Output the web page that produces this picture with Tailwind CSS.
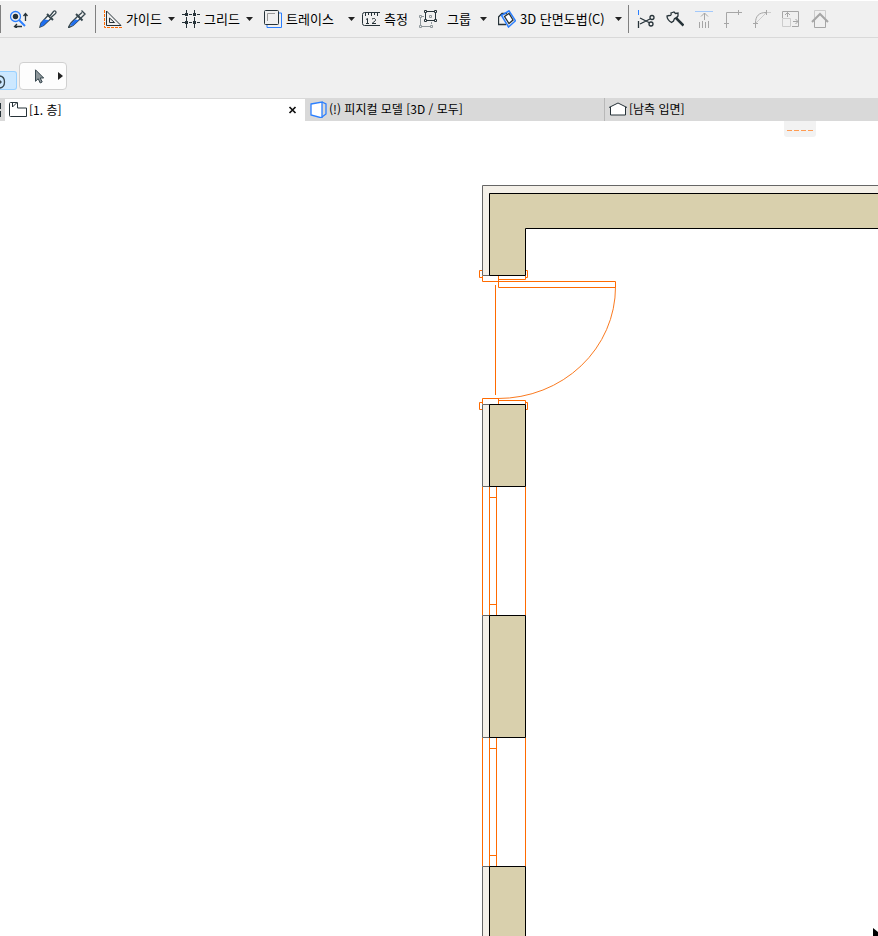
<!DOCTYPE html>
<html lang="ko">

<head>
    <meta charset="UTF-8">
    <meta name="viewport" content="width=device-width, initial-scale=1.0">
    <title>평면도</title>
    <script src="https://cdn.jsdelivr.net/npm/@tailwindcss/browser@4"></script>
</head>

<body class="h-screen flex flex-col overflow-hidden bg-white text-black font-['Noto_Sans_CJK_KR',sans-serif]">
    <!-- Toolbar -->
    <header class="shrink-0 bg-[#f0f0f0]">
        <div class="h-[38px] flex items-center border-t border-white border-b border-b-[#d9d9d9] text-[13px] leading-5 whitespace-nowrap overflow-hidden">
            <span class="w-px h-7 shrink-0 bg-[#808080] mr-[9px]"></span>
            <div class="flex shrink-0 gap-[11px] pr-[9px]">
                <button aria-label="찾기" class="block">
                    <svg width="18" height="18" viewBox="0 0 18 18" fill="none">
                        <circle cx="5.500" cy="6.500" r="5" stroke="#2b7fff" stroke-width="1.300" />
                        <path d="M9 10l6 6" stroke="#2b7fff" stroke-width="2" />
                        <circle cx="5.500" cy="6.500" r="2.700" fill="#263238" />
                        <path d="M15.500 4v7M13.500 6l2-2.500 2 2.500M12 16.500H5M7 14l-2.500 2.500L7 18" stroke="#263238" stroke-width="1.300" />
                    </svg>
                </button>
                <button aria-label="스포이드" class="block">
                    <svg width="18" height="18" viewBox="0 0 18 18" fill="none">
                        <path d="M1 17l1-4 7-7.500 3 3-7.500 7z" fill="#fff" stroke="#37474f" stroke-width="1.300" />
                        <path d="M1 17l1-4L5 9.500l5 .500-5.500 5.500z" fill="#1f6ff0" />
                        <path d="M8 4l6 6" stroke="#37474f" stroke-width="2" />
                        <path d="M11 6l3.500-4.500c1.500-1.500 3.500.5 2 2L12 7.500" fill="#fff" stroke="#37474f" stroke-width="1.300" />
                    </svg>
                </button>
                <button aria-label="주입" class="block">
                    <svg width="18" height="18" viewBox="0 0 18 18" fill="none">
                        <path d="M0 18l3-5L10 6l2.500 2.500-7.500 7z" fill="#fff" stroke="#37474f" stroke-width="1.300" />
                        <path d="M2 16l1.500-3L7 9.500l4 .5-6 5.500z" fill="#1f6ff0" />
                        <path d="M8 4l6.500 6.500" stroke="#37474f" stroke-width="2" />
                        <path d="M10 6l4-3.500M12.500 8.500L16.500 4.500M13.500.5l4 4" stroke="#37474f" stroke-width="1.300" />
                    </svg>
                </button>
            </div>
            <span class="w-px h-7 shrink-0 bg-[#808080] mr-2"></span>

            <button class="w-[71px] shrink-0 flex items-center">
                <svg class="mr-1 shrink-0" width="18" height="18" viewBox="0 0 18 18" fill="none">
                    <path d="M.5 0v17.500H18" stroke="#ff6a00" stroke-dasharray="3 1" />
                    <path d="M2.500 1v14.500H17zM5.500 8v4.500H10.500z" stroke="#263238" />
                </svg>
                가이드
                <svg class="ml-auto" width="7" height="4"><path d="M0 0h7L3.500 4z" fill="#222" /></svg>
            </button>
            <button class="w-[71px] ml-[7px] shrink-0 flex items-center">
                <svg class="mr-1 shrink-0" width="18" height="18" viewBox="0 0 18 18" fill="none" stroke="#263238">
                    <path d="M4.500 0v3M4.500 7v4M4.500 14v4M12.500 0v3M12.500 7v4M12.500 14v4M0 4.500h3M7 4.500h3M15 4.500h3M0 12.500h3M7 12.500h3M15 12.500h3" />
                    <path d="M3 4.500h3M11 4.500h3M3 12.500h3M11 12.500h3" stroke-width="3" />
                </svg>
                그리드
                <svg class="ml-auto" width="7" height="4"><path d="M0 0h7L3.500 4z" fill="#222" /></svg>
            </button>
            <button class="w-[91px] ml-[11px] shrink-0 flex items-center">
                <svg class="mr-1 shrink-0" width="18" height="18" viewBox="0 0 18 18" fill="none">
                    <path d="M17.500 3v14.500H3v-2.500M15 3h2.500" stroke="#2b7fff" />
                    <rect x=".5" y=".5" width="14" height="14" rx="1" stroke="#263238" />
                    <path d="M3.500 11V3.500H11" stroke="#999" />
                </svg>
                트레이스
                <svg class="ml-auto" width="7" height="4"><path d="M0 0h7L3.500 4z" fill="#222" /></svg>
            </button>
            <button class="w-[46px] ml-[7px] shrink-0 flex items-center">
                <svg class="mr-1 shrink-0" width="18" height="18" viewBox="0 0 18 18" fill="none" stroke="#263238">
                    <path d="M18 2.500H2.500Q.5 2.500.5 4.500v9q0 2 2 2H18M3.500 3v3M6.500 3v2M9.500 3v3M12.500 3v2M15.500 3v3" />
                    <path d="M4 9.500l1.500-1V14M4 13.500h3M10 9l1.500-.5h1l1 1v1l-3.500 3h4" />
                </svg>
                측정
            </button>
            <button class="w-[68px] ml-[11px] shrink-0 flex items-center">
                <svg class="mr-[10px] shrink-0" width="18" height="18" viewBox="0 0 18 18" fill="none">
                    <path d="M1.500 8v7M3 16.500h8M12.500 14v-2M3 6.500h2M10.500 5.500h2v2h-2z" stroke="#8e979b" />
                    <path d="M.5 5.500h2v2h-2zM.5 15.500h2v2h-2zM11.500 15.500h2v2h-2z" stroke="#8e979b" />
                    <path d="M8 1.500h7M8 10.500h7M6.500 3v6M16.500 3v6" stroke="#263238" />
                    <path d="M5.500.5h2v2h-2zM15.500.5h2v2h-2zM5.500 9.500h2v2h-2zM15.500 9.500h2v2h-2z" stroke="#263238" />
                </svg>
                그룹
                <svg class="ml-auto" width="7" height="4"><path d="M0 0h7L3.500 4z" fill="#222" /></svg>
            </button>
            <button class="w-[124px] ml-[11px] shrink-0 flex items-center">
                <svg class="mr-1 shrink-0" width="18" height="18" viewBox="0 0 18 18" fill="none">
                    <path d="M8 14.500H.5V7L4 3.500h5" stroke="#263238" stroke-width="1.300" />
                    <path d="M3.500 5.500L11 .800l6.500 10L10.500 17z" stroke="#2b7fff" stroke-width="1.500" />
                    <path d="M6.500 6.500l4.500-3 4 6.500-4 3.500z" fill="#fff" stroke="#263238" stroke-width="1.300" />
                </svg>
                3D 단면도법(C)
                <svg class="ml-auto" width="7" height="4"><path d="M0 0h7L3.500 4z" fill="#222" /></svg>
            </button>
            <span class="w-px h-7 shrink-0 bg-[#808080] ml-[6px] mr-[8px]"></span>

            <div class="flex shrink-0 gap-[11px]">
                <button aria-label="자르기" class="block">
                    <svg width="18" height="18" viewBox="0 0 18 18" fill="none" stroke="#263238">
                        <path d="M1.500 0v5" stroke="#2b7fff" />
                        <path d="M1.500 11v7M3 8l10 5M3 14l10-5" stroke-width="1.300" />
                        <circle cx="15" cy="7.500" r="2" stroke-width="1.300" />
                        <circle cx="14" cy="14" r="2" stroke-width="1.300" />
                    </svg>
                </button>
                <button aria-label="분할" class="block">
                    <svg width="18" height="18" viewBox="0 0 18 18" fill="none" stroke="#263238">
                        <path d="M5 3l3-1 1.500 1.500L12 3v3l-1.500 2-2 .5-1 2.500-2 1.500C3 11 1 9 1 6l2-.5c2 .5 2.500-1 2-2.500z" stroke-width="1.300" />
                        <path d="M9.500 7.500l8 8" stroke-width="2.500" />
                    </svg>
                </button>
                <button aria-label="높이 조정" class="block" disabled>
                    <svg width="18" height="18" viewBox="0 0 18 18" fill="none" stroke="#a6a6a6">
                        <path d="M0 1.500h18" stroke="#a3c9fb" />
                        <path d="M9.500 10V3M6 6.500L9.500 3 13 6.500M4.500 12v6M7.500 11v7M10.500 12v6M13.500 11v7" />
                    </svg>
                </button>
                <button aria-label="교차" class="block" disabled>
                    <svg width="18" height="18" viewBox="0 0 18 18" fill="none" stroke="#a6a6a6">
                        <path d="M2.500 12V2.500H13M0 13.500h5M2.500 12v6M14.500 0v5M13 2.500h5" />
                    </svg>
                </button>
                <button aria-label="모깎기" class="block" disabled>
                    <svg width="18" height="18" viewBox="0 0 18 18" fill="none" stroke="#a6a6a6">
                        <path d="M2.500 13C2.500 6 6 2.500 13 2.500M0 13.500h5M2.500 12v6M13.500 0v5" />
                        <path d="M3 13L13 3M14 2.500h4" stroke="#ccc" />
                    </svg>
                </button>
                <button aria-label="크기 조정" class="block" disabled>
                    <svg width="18" height="18" viewBox="0 0 18 18" fill="none" stroke="#a6a6a6">
                        <path d="M.5 8V1.500h16v15H10M5.500 7V2.500M3 5l2.500-2.500L8 5M11 11.500h5M13.500 9l2.500 2.500-2.500 2.500" />
                        <path d="M.5 8.500h8v8h-8z" stroke="#ccc" />
                    </svg>
                </button>
                <button aria-label="지붕" class="block" disabled>
                    <svg width="18" height="18" viewBox="0 0 18 18" fill="none" stroke="#a6a6a6">
                        <path d="M3.500 8V.5h11V8" stroke="#ccc" />
                        <path d="M3.500 9v8.500h11V9" />
                        <path d="M1 12l8-8 8 8" stroke-width="2" />
                    </svg>
                </button>
            </div>
        </div>

        <!-- Tool options -->
        <div class="h-[60px] flex items-end pb-2">
            <button aria-label="보기" class="w-[17px] h-[19px] border border-l-0 border-[#99d1ff] bg-[#cce8ff] rounded-r-[3px]">
                <svg width="8" height="17" viewBox="0 0 8 17" fill="none" stroke="#37474f">
                    <path d="M0 4c6 1 6 11 0 12" stroke-width="1.300" />
                    <path d="M0 9h1v2H0z" fill="#37474f" />
                </svg>
            </button>
            <button aria-label="화살표" class="w-12 h-7 ml-[2px] flex items-center bg-[#fdfdfd] border border-[#d0d0d0] rounded pl-[14px] pr-[3px]">
                <svg width="12" height="15" viewBox="0 0 12 15">
                    <path d="M1.500 .8v11.500l2.700-2.600 2 4.300 2-1-2-4H9.700z" fill="#8e979b" stroke="#37474f" />
                </svg>
                <svg class="ml-auto" width="5" height="8"><path d="M0 0l5 4-5 4z" fill="#222" /></svg>
            </button>
        </div>
    </header>

    <!-- Tabs -->
    <nav class="h-[23px] shrink-0 flex bg-[#d9d9d9] text-[12px] leading-5 whitespace-nowrap">
        <div class="w-[5px] shrink-0 flex flex-col justify-center gap-[2px]">
            <span class="w-px h-[6px] bg-[#263238]"></span>
            <span class="w-px h-[6px] bg-[#263238]"></span>
        </div>
        <div class="w-[300px] shrink-0 flex items-center bg-white border-t border-[#d9d9d9] pb-px pl-1 pr-2">
            <a href="#" class="flex items-center gap-[2px]">
                <svg width="18" height="16" viewBox="0 0 18 16" fill="none" stroke="#263238">
                    <path d="M.5 1.500q0-1 1-1h7v5.500h9v8.500H1.500q-1 0-1-1zM3.500 1v4l4-4" />
                </svg>
                [1. 층]
            </a>
            <button aria-label="닫기" class="ml-auto">
                <svg width="9" height="8" viewBox="0 0 9 8"><path d="M1.500 1l6 6M7.500 1l-6 6" stroke="#111" stroke-width="1.700" /></svg>
            </button>
        </div>
        <a href="#" class="w-[300px] shrink-0 flex items-center gap-[2px] border-r border-[#b8b8b8] pb-px pl-[5px]">
            <svg width="17" height="18" viewBox="0 0 17 18" fill="none" stroke="#2b7fff">
                <path d="M1 4l11-2v16L1 15z" fill="#fff" stroke-width="1.300" />
                <path d="M12 2l4 2v10l-4 3" stroke-width="1.300" />
            </svg>
            (!) 피지컬 모델 [3D / 모두]
        </a>
        <a href="#" class="flex items-center gap-[2px] pb-px pl-1">
            <svg width="18" height="14" viewBox="0 0 18 14" fill="none">
                <path d="M1.500 5v8h15V5L9 1z" fill="#fff" />
                <path d="M0 5.500L9 1l9 4.500M1.500 5v8h15V5" stroke="#263238" />
            </svg>
            [남측 입면]
        </a>
    </nav>

    <!-- Drawing -->
    <main class="relative flex-1 min-h-0 bg-white overflow-hidden">
        <svg class="block w-full h-full" fill="none">
            <g transform="translate(.5 .5)">
                <!-- windows -->
                <g stroke="#ff6a00">
                    <path d="M482 365v129M489 365v129M496 365v129M525 365v129M489 376h7M489 483h7" />
                    <path d="M482 616v129M489 616v129M496 616v129M525 616v129M489 627h7M489 734h7" />
                </g>
                <!-- exterior finish -->
                <g fill="#f4f0e8" stroke="#666">
                    <path d="M2000 64H482V154H489V72H2000z" />
                    <path d="M482 283h7v82h-7zM482 494h7v122h-7zM482 745h7v400h-7z" />
                </g>
                <!-- walls -->
                <g fill="#d9d0ad" stroke="#000">
                    <path d="M2000 72H489V154H525V107H2000z" />
                    <path d="M489 283h36v82h-36zM489 494h36v122h-36zM489 745h36v400h-36z" />
                </g>
                <!-- door -->
                <g stroke="#ff6a00" stroke-linecap="square">
                    <path d="M481 149h-2v7h3M526 149h1v7h-2M482 155v5h133v6H498V155M498 158h27v-3" />
                    <path d="M495 164v109" />
                    <path d="M615 166A117 111 0 0 1 498 277" stroke="#fa7a20" />
                    <path d="M482 282v-5h16v5M498 279h27v3M481 281h-2v7h2M525 281h2v7h-1" />
                </g>
            </g>
        </svg>
        <div class="absolute top-0 left-[784px] w-8 h-4 bg-[#f2f2f2] rounded-b-[3px] flex items-center justify-center">
            <svg class="mt-[2px]" width="26" height="1"><path d="M0 .5h26" stroke="#ff9b52" stroke-dasharray="5 2" /></svg>
        </div>
        <svg class="absolute bottom-0 right-0" width="5" height="8"><path d="M0 0l5 4v4H0z" fill="#000" /></svg>
    </main>
</body>

</html>
